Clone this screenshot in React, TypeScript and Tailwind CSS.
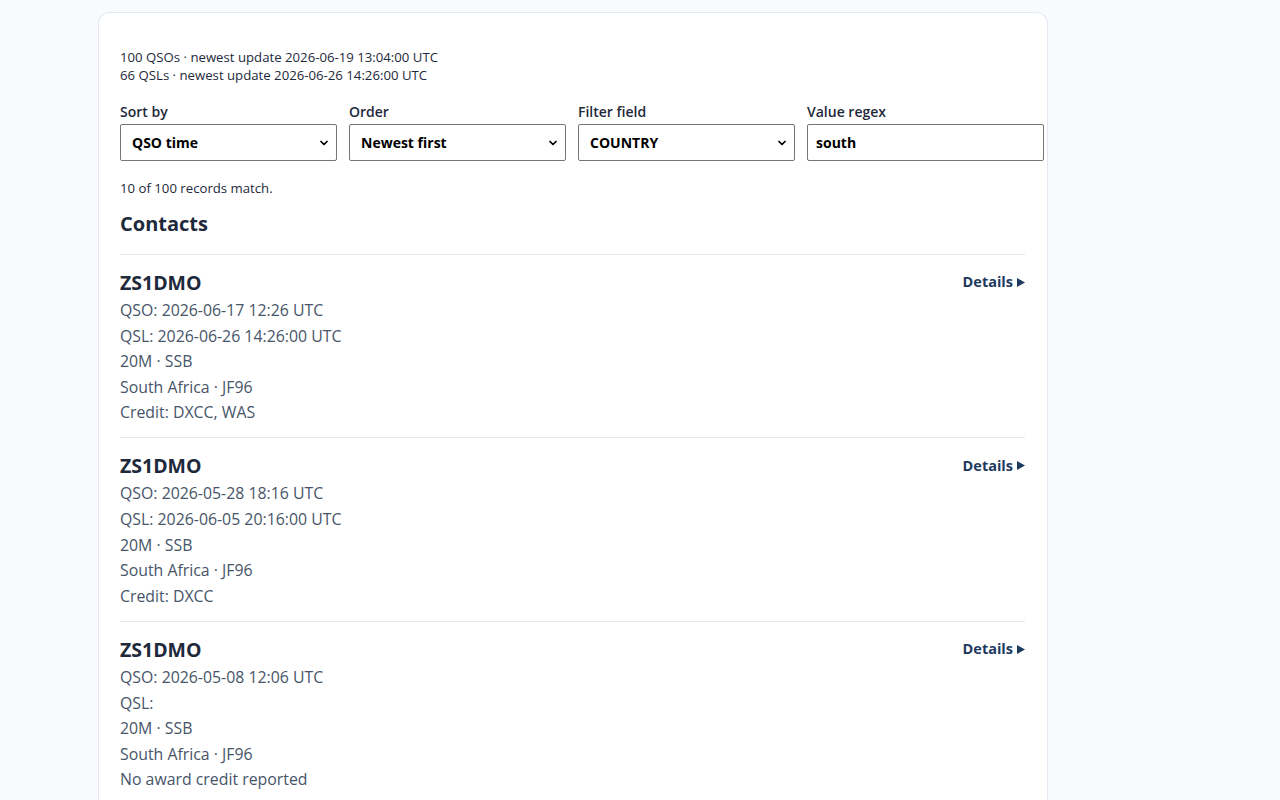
import { ChevronDown } from "lucide-react";

interface Contact {
  call: string;
  qso: string;
  qsl: string;
  band: string;
  place: string;
  credit: string;
}

const contacts: Contact[] = [
  {
    call: "ZS1DMO",
    qso: "2026-06-17 12:26 UTC",
    qsl: "2026-06-26 14:26:00 UTC",
    band: "20M · SSB",
    place: "South Africa · JF96",
    credit: "Credit: DXCC, WAS",
  },
  {
    call: "ZS1DMO",
    qso: "2026-05-28 18:16 UTC",
    qsl: "2026-06-05 20:16:00 UTC",
    band: "20M · SSB",
    place: "South Africa · JF96",
    credit: "Credit: DXCC",
  },
  {
    call: "ZS1DMO",
    qso: "2026-05-08 12:06 UTC",
    qsl: "",
    band: "20M · SSB",
    place: "South Africa · JF96",
    credit: "No award credit reported",
  },
  {
    call: "ZS6ABC",
    qso: "2026-04-20 09:41 UTC",
    qsl: "2026-04-29 11:02:00 UTC",
    band: "40M · CW",
    place: "South Africa · KG33",
    credit: "Credit: DXCC",
  },
];

function SelectBox({ value }: { value: string }) {
  return (
    <div className="relative h-[37px] w-full rounded-[2px] border border-[#767676] bg-white">
      <div className="flex h-full items-center pl-[11px] text-[14px] font-bold text-black">
        {value}
      </div>
      <ChevronDown
        className="absolute right-[6px] top-1/2 size-[12px] -translate-y-1/2 text-black"
        strokeWidth={3.5}
      />
    </div>
  );
}

function Field({ label, children }: { label: string; children: React.ReactNode }) {
  return (
    <div className="flex flex-col gap-[3px]">
      <span className="text-[14px] font-semibold leading-[18px] text-[#1e293b]">{label}</span>
      {children}
    </div>
  );
}

export default function App() {
  return (
    <div
      className="min-h-[800px] bg-[#f8fafc] pt-[12px]"
      style={{ fontFamily: '"Open Sans", "Noto Sans", sans-serif' }}
    >
      <div className="ml-[98px] w-[950px] rounded-t-[12px] border border-b-0 border-[#e2e8f0] bg-white pl-[21px] pr-[22px] pt-[35px]">
        <div className="text-[13.2px] leading-[18px] text-[#1e293b]">
          <div>100 QSOs · newest update 2026-06-19 13:04:00 UTC</div>
          <div>66 QSLs · newest update 2026-06-26 14:26:00 UTC</div>
        </div>

        <div className="mt-[19px] grid w-[904px] grid-cols-4 gap-x-[12px]">
          <Field label="Sort by">
            <SelectBox value="QSO time" />
          </Field>
          <Field label="Order">
            <SelectBox value="Newest first" />
          </Field>
          <Field label="Filter field">
            <SelectBox value="COUNTRY" />
          </Field>
          <Field label="Value regex">
            <div className="flex h-[37px] w-[237px] items-center rounded-[2px] border border-[#767676] bg-white pl-[8px] text-[14px] font-bold text-black">
              south
            </div>
          </Field>
        </div>

        <div className="mt-[18px] text-[13.2px] leading-[18px] text-[#1e293b]">10 of 100 records match.</div>

        <h2 className="mt-[13px] text-[20px] font-bold leading-[28px] text-[#1e293b]">Contacts</h2>

        <div className="mt-[16px]">
          {contacts.map((c, i) => (
            <div key={i} className="flex justify-between border-t border-[#e2e8f0] pb-[11.5px] pt-[17px]">
              <div>
                <div className="text-[19.5px] font-bold leading-[22px] text-[#1e293b]">{c.call}</div>
                <div className="mt-[4px] text-[15.85px] leading-[25.6px] text-[#475569]">
                  <div>QSO: {c.qso}</div>
                  <div>QSL: {c.qsl}</div>
                  <div>{c.band}</div>
                  <div>{c.place}</div>
                  <div>{c.credit}</div>
                </div>
              </div>
              <div className="flex h-[20px] items-center gap-[4px] text-[14.5px] font-bold text-[#1e3a5f]">
                Details
                <svg width="8" height="9" viewBox="0 0 8 9" className="mt-[1px]">
                  <path d="M0 0 L8 4.5 L0 9 Z" fill="#1e3a5f" />
                </svg>
              </div>
            </div>
          ))}
        </div>
      </div>
    </div>
  );
}
